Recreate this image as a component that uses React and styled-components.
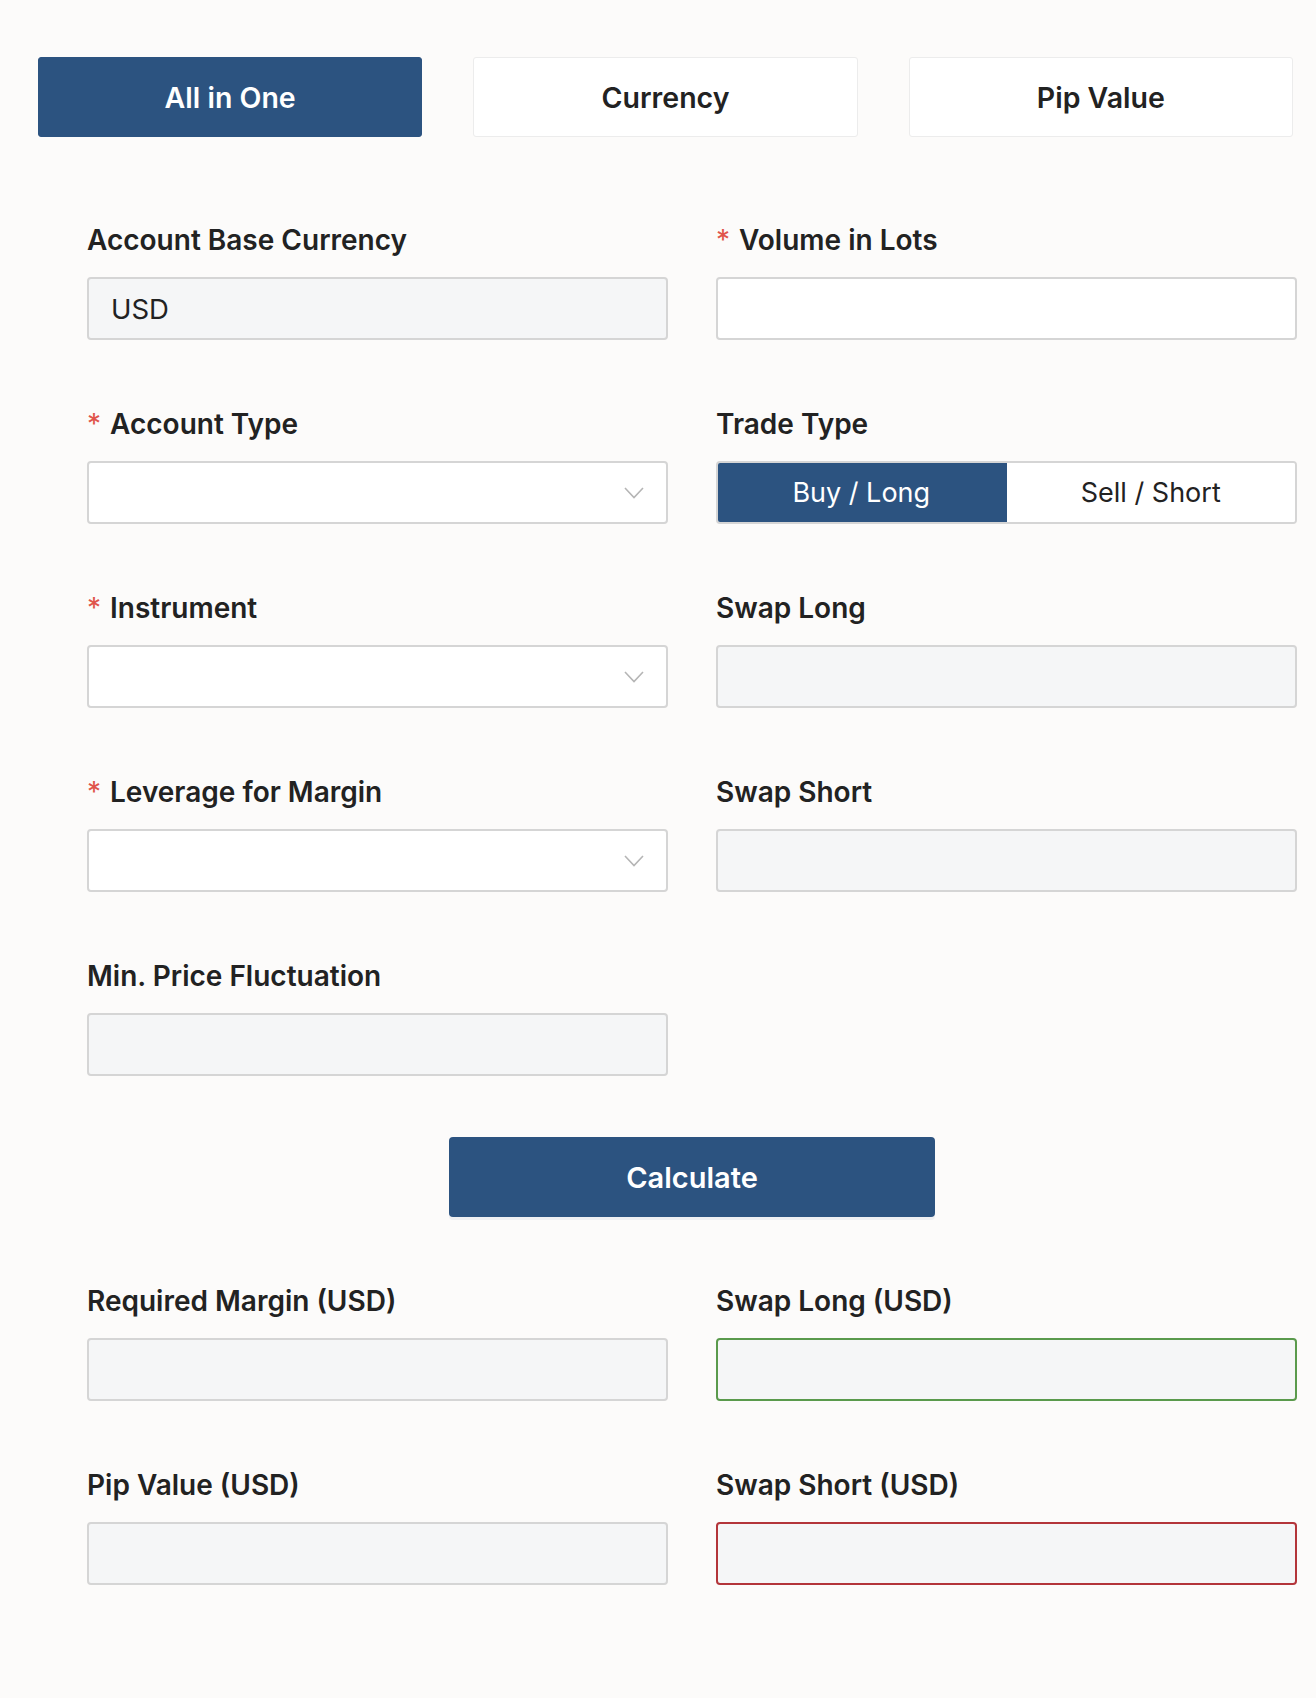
import { useState } from "react";
import styled, { createGlobalStyle } from "styled-components";

const GlobalStyle = createGlobalStyle`
  html, body {
    margin: 0;
    padding: 0;
    background: #fcfbfa;
  }
  * {
    box-sizing: border-box;
  }
  body {
    font-family: Inter, "Noto Sans", "Liberation Sans", sans-serif;
    color: #222;
  }
`;

const NAVY = "#2c5380";

const tabs = ["All in One", "Currency", "Pip Value"];

function Chevron() {
  return (
    <svg width="20" height="12" viewBox="0 0 20 12" fill="none">
      <path d="M1 1l9 9.5L19 1" stroke="#b5b5b5" strokeWidth="1.6" />
    </svg>
  );
}

function Field({ label, required, children }) {
  return (
    <FieldBox>
      <Label>
        {required && <Star>*</Star>}
        {label}
      </Label>
      {children}
    </FieldBox>
  );
}

export default function App() {
  const [tab, setTab] = useState(0);
  const [side, setSide] = useState("buy");

  return (
    <Page>
      <GlobalStyle />
      <TabBar>
        {tabs.map((t, i) => (
          <Tab key={t} $active={tab === i} onClick={() => setTab(i)}>
            {t}
          </Tab>
        ))}
      </TabBar>

      <Form>
        <Field label="Account Base Currency">
          <Input $tone="disabled" value="USD" readOnly />
        </Field>
        <Field label="Volume in Lots" required>
          <Input />
        </Field>

        <Field label="Account Type" required>
          <Select>
            <Chevron />
          </Select>
        </Field>
        <Field label="Trade Type">
          <Toggle>
            <ToggleButton $on={side === "buy"} onClick={() => setSide("buy")}>
              Buy / Long
            </ToggleButton>
            <ToggleButton $on={side === "sell"} onClick={() => setSide("sell")}>
              Sell / Short
            </ToggleButton>
          </Toggle>
        </Field>

        <Field label="Instrument" required>
          <Select>
            <Chevron />
          </Select>
        </Field>
        <Field label="Swap Long">
          <Input $tone="disabled" readOnly />
        </Field>

        <Field label="Leverage for Margin" required>
          <Select>
            <Chevron />
          </Select>
        </Field>
        <Field label="Swap Short">
          <Input $tone="disabled" readOnly />
        </Field>

        <Field label="Min. Price Fluctuation">
          <Input $tone="disabled" readOnly />
        </Field>
      </Form>

      <Actions>
        <CalcButton>Calculate</CalcButton>
      </Actions>

      <Results>
        <Field label="Required Margin (USD)">
          <Input $tone="disabled" readOnly />
        </Field>
        <Field label="Swap Long (USD)">
          <Input $tone="good" readOnly />
        </Field>
        <Field label="Pip Value (USD)">
          <Input $tone="disabled" readOnly />
        </Field>
        <Field label="Swap Short (USD)">
          <Input $tone="bad" readOnly />
        </Field>
      </Results>
    </Page>
  );
}

const Page = styled.div`
  min-height: 100vh;
  padding: 57px 0 100px 38px;
`;

const TabBar = styled.div`
  width: 1255px;
  display: grid;
  grid-template-columns: repeat(3, 1fr);
  column-gap: 51px;
`;

const Tab = styled.button`
  height: 80px;
  border-radius: 3px;
  border: 1.5px solid ${(p) => (p.$active ? NAVY : "#ececec")};
  background: ${(p) => (p.$active ? NAVY : "#fff")};
  color: ${(p) => (p.$active ? "#fff" : "#222")};
  font-family: inherit;
  font-size: 28.5px;
  font-weight: 600;
  cursor: pointer;
`;

const Form = styled.div`
  width: 1210px;
  margin: 87px 0 0 49px;
  display: grid;
  grid-template-columns: 1fr 1fr;
  column-gap: 48px;
  row-gap: 68px;
`;

const Results = styled(Form)`
  margin-top: 68px;
`;

const FieldBox = styled.div`
  display: flex;
  flex-direction: column;
  gap: 21px;
`;

const Label = styled.label`
  font-size: 28px;
  line-height: 32px;
  font-weight: 600;
  color: #222;
  display: flex;
  gap: 9px;
`;

const Star = styled.span`
  color: #e0544b;
  font-weight: 400;
`;

const toneBorder = {
  good: "#5a9a4c",
  bad: "#b3353a",
  disabled: "#d5d5d5",
};

const Input = styled.input`
  height: 63px;
  width: 100%;
  padding: 0 22px;
  border: 2px solid ${(p) => toneBorder[p.$tone] || "#d5d5d5"};
  border-radius: 4px;
  background: ${(p) => (p.$tone ? "#f5f6f7" : "#fff")};
  font-family: inherit;
  font-size: 27.5px;
  color: #222;
  outline: none;
`;

const Select = styled.div`
  height: 63px;
  border: 2px solid #d5d5d5;
  border-radius: 4px;
  background: #fff;
  display: flex;
  align-items: center;
  justify-content: flex-end;
  padding-right: 22px;
`;

const Toggle = styled.div`
  height: 63px;
  display: grid;
  grid-template-columns: 1fr 1fr;
  border: 2px solid #d5d5d5;
  border-radius: 4px;
  overflow: hidden;
  background: #fff;
`;

const ToggleButton = styled.button`
  border: none;
  margin: ${(p) => (p.$on ? "-2px 0 -2px -2px" : "0")};
  background: ${(p) => (p.$on ? NAVY : "#fff")};
  color: ${(p) => (p.$on ? "#fff" : "#222")};
  font-family: inherit;
  font-size: 27px;
  font-weight: 400;
  cursor: pointer;
`;

const Actions = styled.div`
  width: 1210px;
  margin: 61px 0 0 49px;
  display: flex;
  justify-content: center;
`;

const CalcButton = styled.button`
  width: 486px;
  height: 80px;
  border: none;
  border-radius: 4px;
  background: ${NAVY};
  color: #fff;
  font-family: inherit;
  font-size: 29px;
  font-weight: 600;
  box-shadow: 0 3px 0 #eef0f3;
  cursor: pointer;
`;
